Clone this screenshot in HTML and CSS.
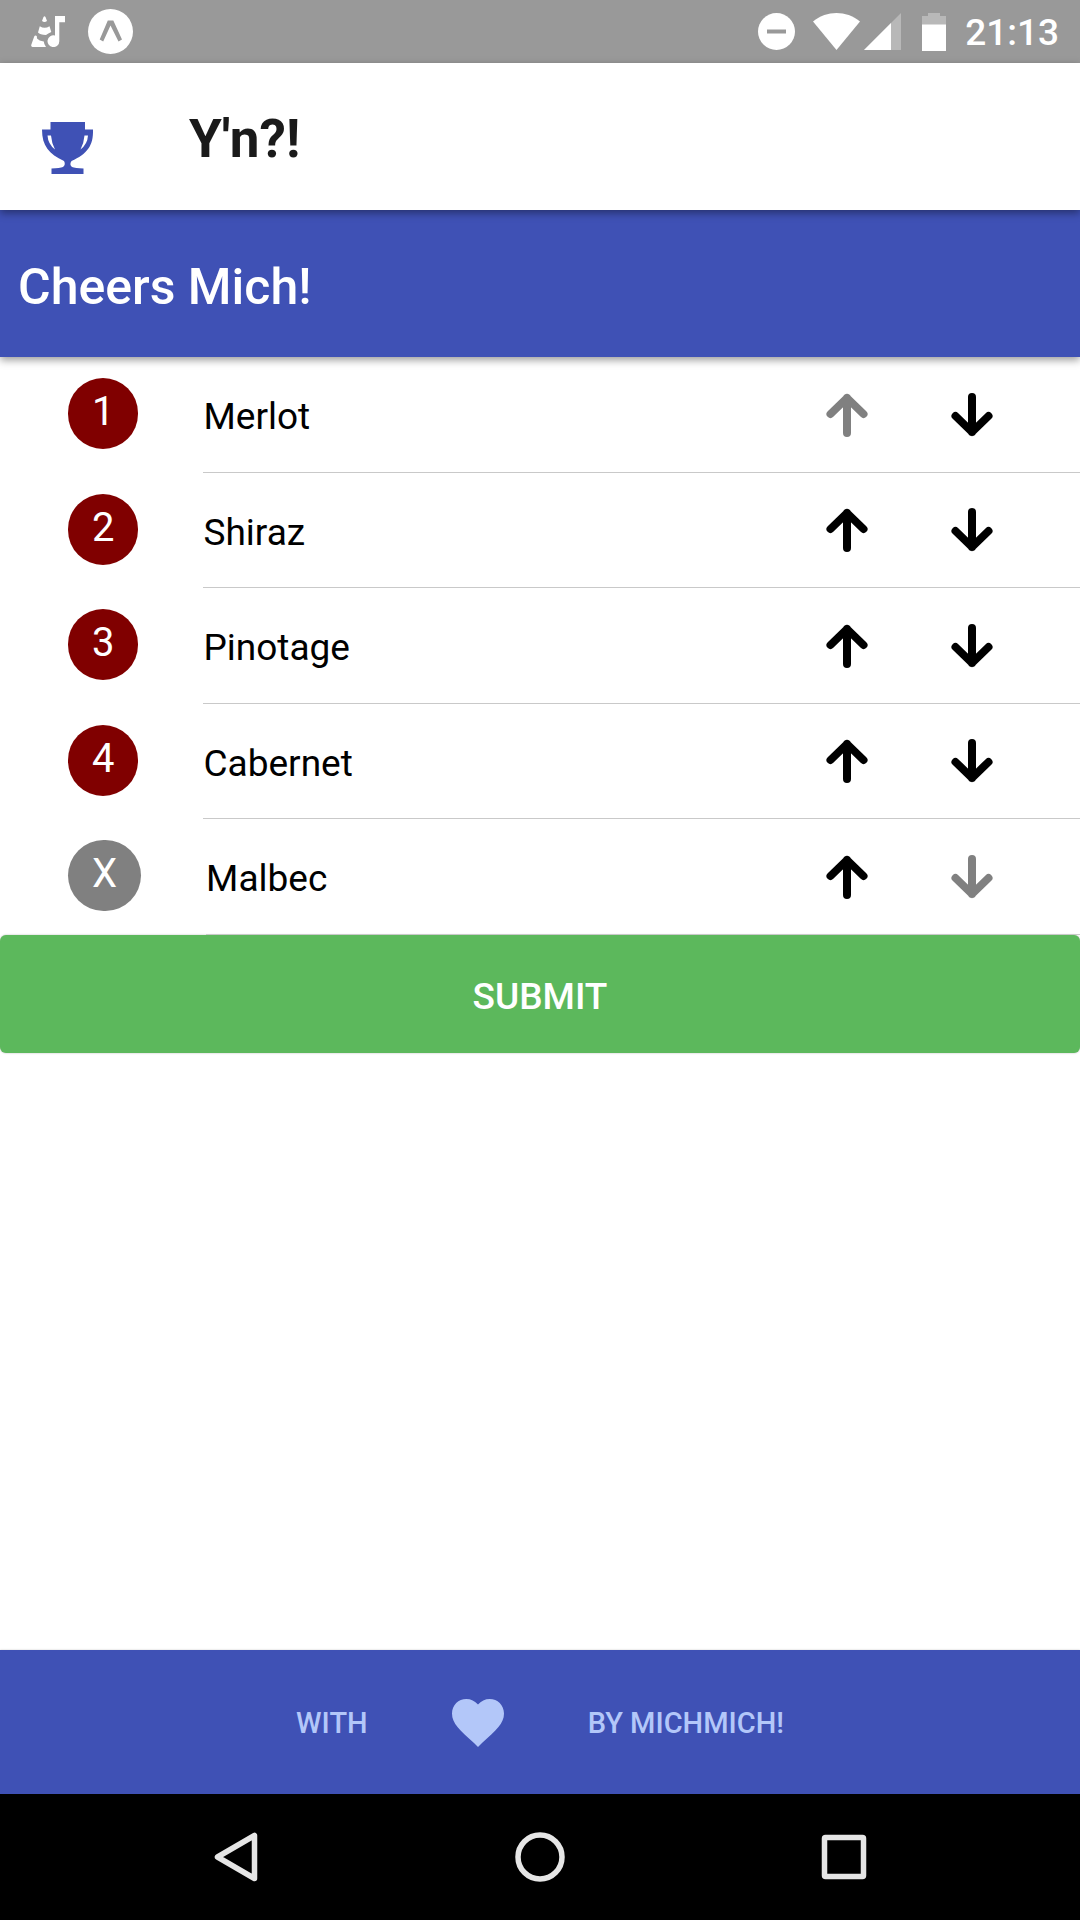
FILE: index.html
```html
<!DOCTYPE html>
<html lang="en">
<head>
<meta charset="utf-8">
<meta name="viewport" content="width=device-width, initial-scale=1">
<title>Y'n?!</title>
<link rel="stylesheet" href="styles.css">
</head>
<body>
<svg class="symbols" aria-hidden="true">
  <symbol id="arrow-up" viewBox="0 0 44 44">
    <path d="M22 40V5M5.500 21L22 5L38.500 21" fill="none" stroke="currentColor" stroke-width="8" stroke-linecap="round" stroke-linejoin="round"/>
  </symbol>
  <symbol id="arrow-down" viewBox="0 0 44 44">
    <path d="M22 4V39M5.500 23L22 39L38.500 23" fill="none" stroke="currentColor" stroke-width="8" stroke-linecap="round" stroke-linejoin="round"/>
  </symbol>
</svg>

<div class="status-bar">
  <div class="notifications">
    <svg width="34" height="31" viewBox="0 0 34 31" aria-label="Music player">
      <path fill="#fff" d="M11 5L12.500 1Q13.500 -.3 14.500 1L16 5Q13.500 6.800 11 5ZM8.800 10.300Q13.600 13.300 18.500 10.300L20.300 16Q17 17.500 15 19Q9 18.500 7 16.500ZM3.200 20.500Q4 19 5.800 20L6 22.500Q8 24.800 12.800 25.500Q13 28.500 15 31H1.500Q0 30.700.2 29ZM24 0H34V6.300H28.300V25A5.900 5.900 0 1 1 24 19.500Z"/>
    </svg>
    <svg width="45" height="45" viewBox="0 0 45 45" aria-label="Expo">
      <circle cx="22.500" cy="22.500" r="22.500" fill="#fff"/>
      <path d="M19.800 11.500H25.300L34 30.500L30.500 32.500L22.500 16.500L15.200 32.500L11.700 30.500Z" fill="#999"/>
    </svg>
  </div>
  <div class="indicators">
    <svg width="37" height="37" viewBox="0 0 37 37" aria-label="Do not disturb">
      <circle cx="18.500" cy="18.500" r="18.500" fill="#fff"/>
      <path d="M9 16.500H28V20.500H9Z" fill="#999"/>
    </svg>
    <svg class="wifi" width="47" height="37" viewBox="0 0 47 37" aria-label="Wi-Fi">
      <path fill="#fff" d="M0 8.500C14-2.800 33-2.800 47 8.500L23.500 37Z"/>
    </svg>
    <svg class="signal" width="37" height="37" viewBox="0 0 37 37" aria-label="Signal">
      <path fill="#b8b8b8" d="M37 0V37H0Z"/>
      <path fill="#fff" d="M27 10V37H0Z"/>
    </svg>
    <svg class="battery" width="24" height="38" viewBox="0 0 24 38" aria-label="Battery">
      <path fill="#b8b8b8" d="M6 0H18V3H24V12H0V3H6Z"/>
      <path fill="#fff" d="M0 11.500H24V38H0Z"/>
    </svg>
    <time class="clock">21:13</time>
  </div>
</div>

<header class="app-bar">
  <svg width="52" height="52" viewBox="0 0 52 52" aria-hidden="true">
    <path fill="#3f51b5" fill-rule="evenodd" d="M8.500 0H43V7.500H51C51.500 24 45 32 29.500 39Q27 42.500 30 45Q33 46 41.500 46.500V52H9.500V46.500Q18 46 21 45Q24 42.500 22 39C7 32 0 24 0 7.500H8.500ZM5.500 13.500Q6 22 13 27.500Q9.500 20.500 9 13.500ZM46 13.500H42.500Q42 20.500 38.500 27.500Q45.500 22 46 13.500Z"/>
  </svg>
  <h1 class="app-title">Y'n?!</h1>
</header>

<div class="greeting-bar">
  <h2 class="greeting">Cheers Mich!</h2>
</div>

<main class="content">
  <ol class="ranking">
    <li class="wine">
      <span class="badge">1</span>
      <div class="wine-body">
        <span class="wine-name">Merlot</span>
        <button class="move" type="button" aria-label="Move Merlot up" disabled><svg width="44" height="44"><use href="#arrow-up"/></svg></button>
        <button class="move" type="button" aria-label="Move Merlot down"><svg width="44" height="44"><use href="#arrow-down"/></svg></button>
      </div>
    </li>
    <li class="wine">
      <span class="badge">2</span>
      <div class="wine-body">
        <span class="wine-name">Shiraz</span>
        <button class="move" type="button" aria-label="Move Shiraz up"><svg width="44" height="44"><use href="#arrow-up"/></svg></button>
        <button class="move" type="button" aria-label="Move Shiraz down"><svg width="44" height="44"><use href="#arrow-down"/></svg></button>
      </div>
    </li>
    <li class="wine">
      <span class="badge">3</span>
      <div class="wine-body">
        <span class="wine-name">Pinotage</span>
        <button class="move" type="button" aria-label="Move Pinotage up"><svg width="44" height="44"><use href="#arrow-up"/></svg></button>
        <button class="move" type="button" aria-label="Move Pinotage down"><svg width="44" height="44"><use href="#arrow-down"/></svg></button>
      </div>
    </li>
    <li class="wine">
      <span class="badge">4</span>
      <div class="wine-body">
        <span class="wine-name">Cabernet</span>
        <button class="move" type="button" aria-label="Move Cabernet up"><svg width="44" height="44"><use href="#arrow-up"/></svg></button>
        <button class="move" type="button" aria-label="Move Cabernet down"><svg width="44" height="44"><use href="#arrow-down"/></svg></button>
      </div>
    </li>
    <li class="wine">
      <span class="badge badge-out">X</span>
      <div class="wine-body">
        <span class="wine-name">Malbec</span>
        <button class="move" type="button" aria-label="Move Malbec up"><svg width="44" height="44"><use href="#arrow-up"/></svg></button>
        <button class="move" type="button" aria-label="Move Malbec down" disabled><svg width="44" height="44"><use href="#arrow-down"/></svg></button>
      </div>
    </li>
  </ol>
  <button class="submit" type="button">SUBMIT</button>
</main>

<footer class="credits">
  <span>WITH</span>
  <svg width="52" height="48" viewBox="0 0 52 48" aria-label="love">
    <path fill="#b3c7f9" d="M26 48L22 44C8 31.500 0 24.500 0 14.500C0 6 6.500 0 14.300 0C18.800 0 23 2 26 5.500C29 2 33.200 0 37.700 0C45.500 0 52 6 52 14.500C52 24.500 44 31.500 30 44Z"/>
  </svg>
  <span>BY MICHMICH!</span>
</footer>

<nav class="system-nav">
  <button type="button" aria-label="Back">
    <svg width="50" height="50" viewBox="0 0 50 50"><path d="M43.500 3.500V46.500L6.500 25Z" fill="none" stroke="#e6e6e6" stroke-width="5.500" stroke-linejoin="round"/></svg>
  </button>
  <button type="button" aria-label="Home">
    <svg width="50" height="50" viewBox="0 0 50 50"><circle cx="25" cy="25" r="22" fill="none" stroke="#e6e6e6" stroke-width="5.500"/></svg>
  </button>
  <button type="button" aria-label="Overview">
    <svg width="50" height="50" viewBox="0 0 50 50"><rect x="5.500" y="5.500" width="39" height="39" rx="1" fill="none" stroke="#e6e6e6" stroke-width="5.500" stroke-linejoin="round"/></svg>
  </button>
</nav>
</body>
</html>
```

FILE: styles.css
```css
* {
  box-sizing: border-box;
}

body {
  display: flex;
  flex-direction: column;
  min-height: 100vh;
  margin: 0;
  background: #fff;
  color: #000;
  font-family: Roboto, "Liberation Sans", sans-serif;
}

h1,
h2,
ol {
  margin: 0;
  padding: 0;
}

button {
  margin: 0;
  padding: 0;
  border: 0;
  background: none;
  color: inherit;
  font: inherit;
  cursor: pointer;
}

svg {
  display: block;
  flex: none;
}

.symbols {
  position: absolute;
  width: 0;
  height: 0;
}

/* Android status bar */
.status-bar {
  display: flex;
  align-items: center;
  justify-content: space-between;
  height: 63px;
  padding: 0 21px 0 31px;
  background: #999;
}

.notifications,
.indicators {
  display: flex;
  align-items: center;
}

.notifications {
  gap: 23px;
}

.wifi {
  margin-left: 18px;
}

.signal {
  margin-left: 4px;
}

.battery {
  margin-left: 21px;
}

.clock {
  margin-left: 19px;
  padding-top: 2px;
  color: #fff;
  font-size: 37px;
  font-weight: 500;
  line-height: 61px;
}

/* App bars */
.app-bar,
.greeting-bar {
  position: relative;
  display: flex;
  align-items: center;
  height: 147px;
  box-shadow: 0 3px 8px rgba(0, 0, 0, 0.4);
}

.app-bar {
  z-index: 2;
  gap: 95px;
  padding: 22px 42px 0;
  background: #fff;
}

.app-title {
  padding-bottom: 18px;
  color: #1a1a1a;
  font-size: 53px;
  font-weight: 700;
  line-height: 64px;
}

.greeting-bar {
  z-index: 1;
  padding: 6px 18px 0;
  background: #3f51b5;
}

.greeting {
  color: #fff;
  font-size: 50px;
  font-weight: 500;
  line-height: 60px;
}

/* Wine ranking */
.content {
  flex: 1;
}

.ranking {
  list-style: none;
}

.wine {
  display: flex;
  gap: 65px;
  height: 116px;
  padding-left: 68px;
}

.wine:nth-child(even) {
  height: 115px;
}

.badge {
  height: 71px;
  margin-top: 21px;
  padding: 0 24px;
  border-radius: 36px;
  background: #800000;
  color: #fff;
  font-size: 40px;
  line-height: 67px;
}

.badge-out {
  background: #808080;
}

.wine-body {
  display: flex;
  flex: 1;
  align-items: center;
  padding-right: 56px;
  border-bottom: 1px solid #c9c9c9;
}

.wine-name {
  flex: 1;
  padding-top: 5px;
  font-size: 37px;
  line-height: 48px;
}

.move {
  display: flex;
  justify-content: center;
  width: 105px;
  margin-right: 20px;
}

.move + .move {
  margin-right: 0;
}

.move:disabled {
  color: #808080;
  cursor: default;
}

.submit {
  display: block;
  width: 100%;
  height: 118px;
  padding-top: 4px;
  border-radius: 6px;
  background: #5cb85c;
  box-shadow: 0 0 2px rgba(0, 0, 0, 0.3);
  color: #fff;
  font-size: 37px;
  font-weight: 500;
}

/* Footer */
.credits {
  display: flex;
  align-items: center;
  justify-content: center;
  gap: 84px;
  height: 144px;
  padding-top: 2px;
  background: #3f51b5;
  box-shadow: 0 0 2px rgba(0, 0, 0, 0.2);
  color: #b3c7f9;
  font-size: 29px;
  font-weight: 500;
}

/* Android navigation bar */
.system-nav {
  display: flex;
  justify-content: center;
  gap: 254px;
  height: 126px;
  background: #000;
}
```
